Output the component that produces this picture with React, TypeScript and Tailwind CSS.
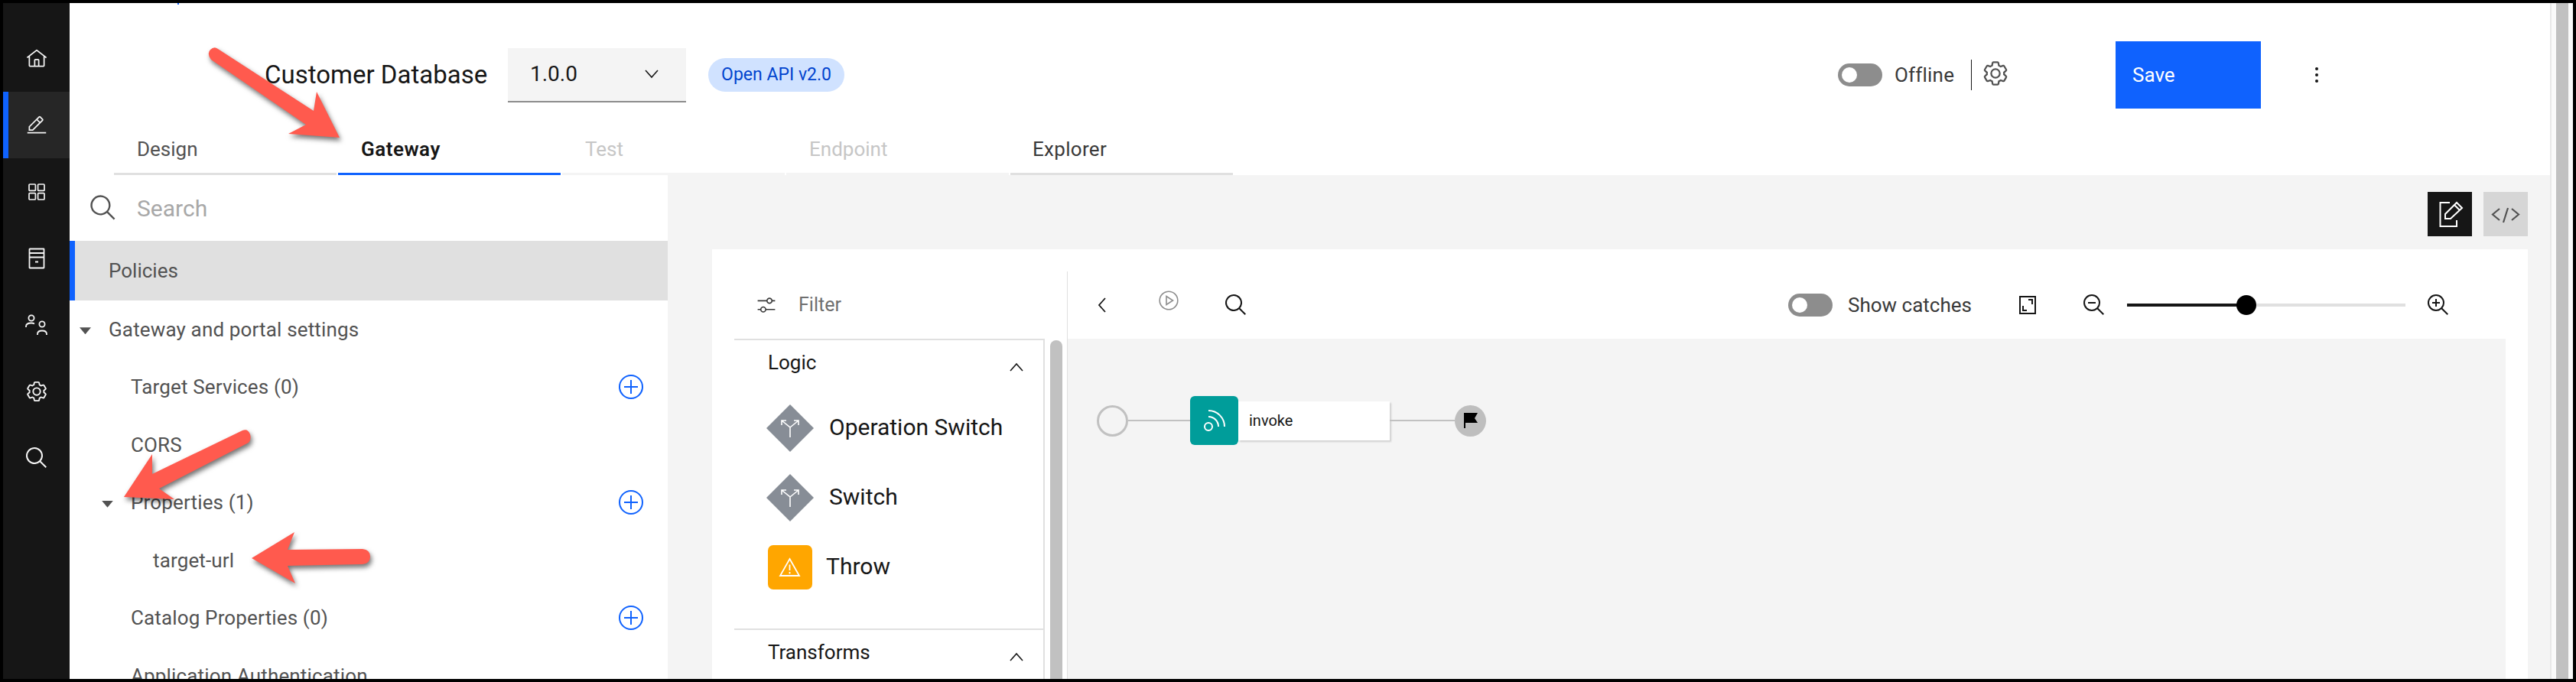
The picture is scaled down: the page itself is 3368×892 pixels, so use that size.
const Search = ({ className = "" }: { className?: string }) => (
  <svg viewBox="0 0 32 32" fill="currentColor" className={className}>
    <path d="M29,27.5859l-7.5521-7.5521a11.0177,11.0177,0,1,0-1.4141,1.4141L27.5859,29ZM4,13a9,9,0,1,1,9,9A9.01,9.01,0,0,1,4,13Z" />
  </svg>
)

const Gear = ({ className = "" }: { className?: string }) => (
  <svg viewBox="0 0 32 32" fill="currentColor" className={className}>
    <path d="M27,16.76c0-.25,0-.5,0-.76s0-.51,0-.77l1.92-1.68A2,2,0,0,0,29.3,11L26.94,7a2,2,0,0,0-1.73-1,2,2,0,0,0-.64.1l-2.43.82a11.35,11.35,0,0,0-1.31-.75l-.51-2.52a2,2,0,0,0-2-1.61H13.64a2,2,0,0,0-2,1.61l-.51,2.52a11.48,11.48,0,0,0-1.32.75L7.43,6.06A2,2,0,0,0,6.79,6,2,2,0,0,0,5.06,7L2.7,11a2,2,0,0,0,.41,2.51L5,15.24c0,.25,0,.5,0,.76s0,.51,0,.77L3.11,18.45A2,2,0,0,0,2.7,21L5.06,25a2,2,0,0,0,1.73,1,2,2,0,0,0,.64-.1l2.43-.82a11.35,11.35,0,0,0,1.31.75l.51,2.52a2,2,0,0,0,2,1.61h4.72a2,2,0,0,0,2-1.61l.51-2.52a11.48,11.48,0,0,0,1.32-.75l2.42.82a2,2,0,0,0,.64.1,2,2,0,0,0,1.73-1L29.3,21a2,2,0,0,0-.41-2.51ZM25.21,24l-3.43-1.16a8.86,8.86,0,0,1-2.71,1.57L18.36,28H13.64l-.71-3.55a9.36,9.36,0,0,1-2.7-1.57L6.79,24,4.43,20l2.72-2.4a8.9,8.9,0,0,1,0-3.13L4.43,12,6.79,8l3.43,1.16a8.86,8.86,0,0,1,2.71-1.57L13.64,4h4.72l.71,3.55a9.36,9.36,0,0,1,2.7,1.57L25.21,8,27.57,12l-2.72,2.4a8.9,8.9,0,0,1,0,3.13L27.57,20Z" />
    <path d="M16,22a6,6,0,1,1,6-6A5.94,5.94,0,0,1,16,22Zm0-10a3.91,3.91,0,0,0-4,4,3.91,3.91,0,0,0,4,4,3.91,3.91,0,0,0,4-4A3.91,3.91,0,0,0,16,12Z" />
  </svg>
)

const Chevron = ({ up = false }: { up?: boolean }) => (
  <svg viewBox="0 0 20 12" fill="none" stroke="currentColor" strokeWidth="1.6" className="w-[20px] h-[12px]">
    <path d={up ? "M2 11L10 2l8 9" : "M2 1l8 9 8-9"} />
  </svg>
)

const AddCircle = () => (
  <svg viewBox="0 0 32 32" fill="none" stroke="#0f62fe" strokeWidth="2" className="w-[32px] h-[32px] mb-1">
    <circle cx="16" cy="16" r="15" />
    <path d="M16 7v18M7 16h18" />
  </svg>
)

const Toggle = () => (
  <div className="w-[58px] h-[30px] rounded-full bg-[#8d8d8d] flex items-center pl-[5px]">
    <div className="w-[20px] h-[20px] rounded-full bg-white" />
  </div>
)

const Branch = () => (
  <svg viewBox="0 0 62 62" className="w-[62px] h-[62px] shrink-0">
    <polygon points="0,31 31,0 62,31 31,62" fill="#878d96" />
    <path d="M31 43V30L20 21M31 30l11-9M20 27v-6h6M42 27v-6h-6" fill="none" stroke="white" strokeWidth="1.6" />
  </svg>
)

const navIcons = [
  <svg key="home" viewBox="0 0 32 32" fill="currentColor" className="w-[28px] h-[28px]">
    <path d="M16.6123,2.2138a1.01,1.01,0,0,0-1.2427,0L1,13.4194l1.2427,1.5717L4,13.6209V26a2.0041,2.0041,0,0,0,2,2H26a2.0037,2.0037,0,0,0,2-2V13.63L29.7573,15,31,13.4282ZM18,26H14V18h4Zm2,0V18a2.0023,2.0023,0,0,0-2-2H14a2.002,2.002,0,0,0-2,2v8H6V12.0615l10-7.79,10,7.8005V26Z" />
  </svg>,
  <svg key="edit" viewBox="0 0 32 32" fill="currentColor" className="w-[28px] h-[28px]">
    <path d="M2 26H30V28H2zM25.4 9c.8-.8.8-2 0-2.8l-3.6-3.6c-.8-.8-2-.8-2.8 0l-15 15V24h6.4L25.4 9zM20.4 4L24 7.6l-3 3L17.4 7 20.4 4zM6 22v-3.6l10-10 3.6 3.6-10 10H6z" />
  </svg>,
  <svg key="apps" viewBox="0 0 24 24" fill="none" stroke="currentColor" strokeWidth="1.7" className="w-[24px] h-[24px]">
    <rect x="2" y="2" width="8.4" height="8.4" rx="1" />
    <rect x="13.6" y="2" width="8.4" height="8.4" rx="1" />
    <rect x="2" y="13.6" width="8.4" height="8.4" rx="1" />
    <rect x="13.6" y="13.6" width="8.4" height="8.4" rx="1" />
  </svg>,
  <svg key="server" viewBox="0 0 22 28" fill="none" stroke="currentColor" strokeWidth="1.8" className="w-[22px] h-[28px]">
    <rect x="1.5" y="1.5" width="19" height="25" rx="0.5" />
    <path d="M1.5 7h19M1.5 12.5h19M9 18.5h4" />
  </svg>,
  <svg key="users" viewBox="0 0 30 28" fill="none" stroke="currentColor" strokeWidth="1.8" className="w-[30px] h-[28px]">
    <circle cx="8" cy="5" r="3.6" />
    <path d="M1 17v-1c0-3 2.500-4.500 7-4.500 2 0 3 .3 4 1" />
    <circle cx="22" cy="13" r="3.600" />
    <path d="M16 27v-1c0-3 2-4.500 6-4.500s6 1.500 6 4.500v1" />
  </svg>,
  <Gear key="gear" className="w-[30px] h-[30px]" />,
  <Search key="search" className="w-[32px] h-[32px]" />,
]

const TreeRow = ({ label, pad, slot, open, add }: { label: string; pad: string; slot: string; open?: boolean; add?: boolean }) => (
  <div className={`h-[75.5px] shrink-0 flex items-center pr-[32px] ${pad}`}>
    <div className={`shrink-0 ${slot}`}>
      {open && <div className="w-[15px] h-[9px] bg-[#525252] [clip-path:polygon(0_0,100%_0,50%_100%)]" />}
    </div>
    <span className="flex-1 mb-[3px] text-[26px] tracking-[0.15px] text-[#525252]">{label}</span>
    {add && <AddCircle />}
  </div>
)

const SectionHead = ({ label }: { label: string }) => (
  <div className="h-[62px] flex items-center justify-between pl-[44px] pr-[25px] text-[26px] text-[#161616]">
    <span className="mb-[3px]">{label}</span>
    <span className="mt-2"><Chevron up /></span>
  </div>
)

export default function App() {
  return (
    <div className="relative w-[3368px] h-[892px] overflow-hidden bg-black p-[4px] [font-family:Roboto,sans-serif]">
      <div className="flex h-full">
        <nav className="w-[87px] shrink-0 bg-[#161616] pt-[29px] flex flex-col text-[#f4f4f4]">
          {navIcons.map((icon, i) => (
            <div key={i} className={i === 1 ? "h-[87px] flex items-center justify-center bg-[#262626] border-l-[7px] border-[#0f62fe] pr-[7px]" : "h-[87px] flex items-center justify-center"}>
              {icon}
            </div>
          ))}
        </nav>

        <main className="flex-1 min-w-0 flex flex-col bg-white">
          <header className="h-[225px] shrink-0 pt-[50px]">
            <div className="h-[88px] flex items-center pl-[255px] pr-[303px]">
              <span className="w-[318px] text-[33px] text-[#161616]">Customer Database</span>
              <div className="w-[233px] h-[71px] flex items-center justify-between pl-[29px] pr-[35px] bg-[#f4f4f4] border-b-2 border-[#8d8d8d] text-[28px] text-[#161616]">
                <span>1.0.0</span>
                <Chevron />
              </div>
              <div className="ml-[29px] w-[178px] h-[44px] rounded-full bg-[#d0e2ff] flex items-center justify-center text-[23px] text-[#0043ce]">Open API v2.0</div>
              <div className="flex-1" />
              <Toggle />
              <span className="ml-[16px] w-[77px] text-[26px] tracking-[0.2px] text-[#393939]">Offline</span>
              <div className="ml-[23px] w-px h-[40px] bg-[#161616]" />
              <Gear className="ml-[13px] w-[36px] h-[36px] mb-1 text-[#525252]" />
              <button className="ml-[139px] w-[190px] h-[88px] bg-[#0f62fe] text-white text-[26px] text-left pl-[22px]">Save</button>
              <div className="ml-[71px] flex flex-col gap-[4px]">
                <div className="w-[4px] h-[4px] rounded-full bg-[#161616]" />
                <div className="w-[4px] h-[4px] rounded-full bg-[#161616]" />
                <div className="w-[4px] h-[4px] rounded-full bg-[#161616]" />
              </div>
            </div>
            <div className="mt-[23px] ml-[58px] flex gap-[2px] text-[26px]">
              <div className="w-[291px] h-[64px] pl-[30px] pt-[11px] border-b-[3px] border-[#e0e0e0] text-[#525252]">Design</div>
              <div className="w-[291px] h-[64px] pl-[30px] pt-[11px] border-b-[3px] border-[#0f62fe] text-[#161616] font-semibold tracking-[0.5px]">Gateway</div>
              <div className="w-[291px] h-[64px] pl-[30px] pt-[11px] border-b-[3px] border-[#f4f4f4] text-[#c6c6c6]">Test</div>
              <div className="w-[291px] h-[64px] pl-[30px] pt-[11px] border-b-[3px] border-[#f4f4f4] text-[#c6c6c6]">Endpoint</div>
              <div className="w-[291px] h-[64px] pl-[29px] pt-[11px] border-b-[3px] border-[#e0e0e0] text-[#393939] tracking-[0.3px]">Explorer</div>
            </div>
          </header>

          <div className="flex-1 min-h-0 flex">
            <aside className="w-[782px] shrink-0 flex flex-col overflow-hidden">
              <div className="h-[86px] shrink-0 flex items-center pl-[25px]">
                <Search className="w-[38px] h-[38px] text-[#525252]" />
                <span className="ml-[25px] text-[30px] text-[#a8a8a8]">Search</span>
              </div>
              <div className="h-[78px] shrink-0 flex items-center border-l-[7px] border-[#0f62fe] bg-[#e0e0e0] pl-[44px] text-[26px] text-[#525252]">Policies</div>
              <div className="mt-[2px]">
                <TreeRow label="Gateway and portal settings" pad="pl-[13px]" slot="w-[38px]" open />
                <TreeRow label="Target Services (0)" pad="pl-[42px]" slot="w-[38px]" add />
                <TreeRow label="CORS" pad="pl-[42px]" slot="w-[38px]" />
                <TreeRow label="Properties (1)" pad="pl-[42px]" slot="w-[38px]" open add />
                <TreeRow label="target-url" pad="pl-[109px]" slot="w-0" />
                <TreeRow label="Catalog Properties (0)" pad="pl-[42px]" slot="w-[38px]" add />
                <TreeRow label="Application Authentication" pad="pl-[42px]" slot="w-[38px]" />
              </div>
            </aside>

            <section className="flex-1 min-w-0 flex flex-col bg-[#f4f4f4]">
              <div className="h-[97px] shrink-0 pt-[22px] pr-[29px] flex justify-end gap-[15px]">
                <button className="w-[58px] h-[58px] bg-[#161616]">
                  <svg viewBox="0 0 58 58" fill="none" stroke="white" strokeWidth="2" className="w-[58px] h-[58px]">
                    <path d="M29 14H16.500V45H38V37" />
                    <path d="M23 35V29L38 14L45 21L30 35ZM35 17l7 7" />
                  </svg>
                </button>
                <button className="w-[58px] h-[58px] bg-[#d6d6d6]">
                  <svg viewBox="0 0 58 58" fill="none" stroke="#525252" strokeWidth="2.200" className="w-[58px] h-[58px]">
                    <path d="M21 22l-9 7.500 9 7.500M37 22l9 7.500-9 7.500M32 21l-6 19" />
                  </svg>
                </button>
              </div>

              <div className="flex-1 min-h-0 ml-[58px] mr-[29px] pt-[29px] flex bg-white">
                <div className="w-[465px] shrink-0 flex flex-col border-r border-[#e0e0e0]">
                  <div className="h-[88px] shrink-0 flex items-center pl-[58px]">
                    <svg viewBox="0 0 32 32" fill="#393939" className="w-[26px] h-[26px]">
                      <path d="M30,8h-4.100c-0.500-2.300-2.500-4-4.900-4s-4.400,1.700-4.900,4H2v2h14.100c0.500,2.300,2.500,4,4.900,4s4.400-1.700,4.900-4H30V8z M21,12c-1.700,0-3-1.300-3-3s1.300-3,3-3s3,1.300,3,3S22.700,12,21,12z" />
                      <path d="M2,24h4.100c0.500,2.300,2.500,4,4.900,4s4.400-1.700,4.900-4H30v-2H15.900c-0.500-2.300-2.500-4-4.900-4s-4.400,1.700-4.900,4H2V24z M11,20c1.700,0,3,1.300,3,3s-1.300,3-3,3s-3-1.300-3-3S9.300,20,11,20z" />
                    </svg>
                    <span className="ml-[29px] text-[25px] text-[#6f6f6f]">Filter</span>
                  </div>
                  <div className="flex-1 min-h-0 flex pl-[29px]">
                    <div className="w-[406px] shrink-0 border-t-2 border-r-2 border-[#e0e0e0]">
                      <SectionHead label="Logic" />
                      <div className="mt-[22px] pl-[42px] flex items-center gap-[20px] text-[30px] text-[#161616]">
                        <Branch />
                        <span className="mb-[3px]">Operation Switch</span>
                      </div>
                      <div className="mt-[29px] pl-[42px] flex items-center gap-[20px] text-[30px] text-[#161616]">
                        <Branch />
                        <span className="mb-[3px]">Switch</span>
                      </div>
                      <div className="mt-[31px] mb-[51px] pl-[44px] flex items-center gap-[18px] text-[30px] text-[#161616]">
                        <div className="w-[58px] h-[58px] rounded-[7px] bg-[#ffa600]">
                          <svg viewBox="0 0 58 58" fill="none" stroke="white" strokeWidth="1.800" className="w-[58px] h-[58px]">
                            <path d="M28.500 18L41 40H16Z" />
                            <path d="M28.500 25.500V33M28.500 35v2.400" />
                          </svg>
                        </div>
                        <span className="mb-[3px]">Throw</span>
                      </div>
                      <div className="border-t-2 border-[#e0e0e0]">
                        <SectionHead label="Transforms" />
                      </div>
                    </div>
                    <div className="ml-[7px] w-[16px] mt-[2px] bg-[#c1c1c1] rounded-t-full" />
                  </div>
                </div>

                <div className="flex-1 min-w-0 flex flex-col">
                  <div className="h-[88px] shrink-0 flex items-center pl-[39px] pr-[101px]">
                    <svg viewBox="0 0 12 22" fill="none" stroke="#161616" strokeWidth="1.800" className="w-[12px] h-[22px]">
                      <path d="M10 2L2 11l8 9" />
                    </svg>
                    <svg viewBox="0 0 26 26" fill="none" stroke="#8d8d8d" strokeWidth="1.600" className="ml-[68px] mb-3 w-[26px] h-[26px]">
                      <circle cx="13" cy="13" r="11.800" />
                      <path d="M10 7.500v11l8.500-5.500Z" />
                    </svg>
                    <Search className="ml-[59px] w-[32px] h-[32px] text-[#161616]" />
                    <div className="flex-1" />
                    <Toggle />
                    <span className="ml-[20px] w-[224px] text-[26px] text-[#393939]">Show catches</span>
                    <svg viewBox="0 0 22 24" fill="none" stroke="#161616" strokeWidth="2" className="w-[22px] h-[24px]">
                      <rect x="1" y="1" width="20" height="22" />
                      <path d="M12 5h5v6M5 13v6h5" />
                    </svg>
                    <svg viewBox="0 0 32 32" fill="#161616" className="ml-[60px] w-[32px] h-[32px]">
                      <path d="M8 12H18V14H8z" />
                      <path d="M21.4479,20A10.856,10.856,0,0,0,24,13,11,11,0,1,0,13,24a10.856,10.856,0,0,0,7-2.5521L27.5859,29,29,27.5859ZM13,22a9,9,0,1,1,9-9A9.01,9.01,0,0,1,13,22Z" />
                    </svg>
                    <div className="ml-[27px] w-[364px] h-[4px] mb-[1px] bg-[#e0e0e0] flex items-center">
                      <div className="w-[156px] h-[4px] bg-[#161616]" />
                      <div className="-ml-[13px] w-[26px] h-[26px] rounded-full bg-black" />
                    </div>
                    <svg viewBox="0 0 32 32" fill="#161616" className="ml-[27px] w-[32px] h-[32px]">
                      <path d="M18 12L14 12 14 8 12 8 12 12 8 12 8 14 12 14 12 18 14 18 14 14 18 14 18 12z" />
                      <path d="M21.4479,20A10.856,10.856,0,0,0,24,13,11,11,0,1,0,13,24a10.856,10.856,0,0,0,7-2.5521L27.5859,29,29,27.5859ZM13,22a9,9,0,1,1,9-9A9.01,9.01,0,0,1,13,22Z" />
                    </svg>
                  </div>
                  <div className="flex-1 min-h-0 mr-[29px] bg-[#f4f4f4] pt-[75px] pl-[38px]">
                    <div className="flex items-center">
                      <div className="w-[41px] h-[41px] rounded-full border-[3px] border-[#c1c1c1]" />
                      <div className="w-[81px] h-[2px] bg-[#c1c1c1]" />
                      <div className="w-[63px] h-[64px] rounded-[6px] bg-[#009d9a] z-10">
                        <svg viewBox="0 0 63 64" fill="none" stroke="white" strokeWidth="2" className="w-[63px] h-[64px]">
                          <circle cx="24" cy="40" r="5" />
                          <path d="M24 27a13 13 0 0 1 13 13M24 19a21 21 0 0 1 21 21" />
                        </svg>
                      </div>
                      <div className="w-[198px] h-[51px] flex items-center pl-[14px] bg-white text-[20px] text-[#161616] shadow-[2px_2px_2px_rgba(0,0,0,0.15)]">invoke</div>
                      <div className="w-[85px] h-[2px] bg-[#c1c1c1]" />
                      <div className="w-[41px] h-[41px] rounded-full bg-[#bebebe] flex items-center justify-center">
                        <svg viewBox="0 0 18 20" fill="black" className="w-[18px] h-[20px]">
                          <path d="M0 0H18L14 7l4 6H2v7H0Z" />
                        </svg>
                      </div>
                    </div>
                  </div>
                </div>
              </div>
            </section>
          </div>
        </main>

        <div className="w-[30px] shrink-0 border-l-2 border-[#e8e8e8] bg-[#fafafa] px-[6px]">
          <div className="w-[16px] h-full bg-[#c1c1c1]" />
        </div>
      </div>

      <div className="absolute left-[232px] top-[4px] w-[2px] h-[2px] bg-[#0f62fe]" />

      <svg viewBox="0 0 3368 892" fill="#ff5a4e" className="absolute inset-0 w-[3368px] h-[892px] pointer-events-none drop-shadow-[2px_4px_3px_rgba(0,0,0,0.55)]">
        <path d="M285 64L410 145L414 120L444 180L377 175L400 163L276 78Q270 70 275 65Q280 60 285 64Z" />
        <path d="M317 563Q324 560 327 568Q329 575 325 579L208 639L228 653L162 650L199 594L199 620Z" />
        <path d="M329 730L385 696L376 719L474 718Q484 719 484 728Q484 737 474 738L376 740L386 763Z" />
      </svg>
    </div>
  )
}
